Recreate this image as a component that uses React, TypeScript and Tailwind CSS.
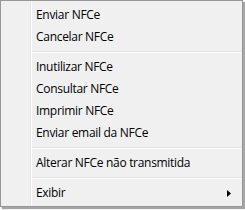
import React from "react";

const Item = ({ label, arrow }: { label: string; arrow?: boolean }) => (
  <div className="h-[22px] flex items-center pl-[4px] pr-[10px] justify-between">
    <span className="text-[12px] leading-none text-black whitespace-nowrap tracking-[-0.3px]">{label}</span>
    {arrow && (
      <svg width="4" height="7" viewBox="0 0 4 7" className="mr-[1px]">
        <path d="M0 0 L4 3.5 L0 7 Z" fill="#000" />
      </svg>
    )}
  </div>
);

const Sep = () => (
  <div className="h-[8px] flex flex-col justify-center">
    <div className="h-px bg-[#e0e0e0]" />
    <div className="h-px bg-white" />
  </div>
);

export default function App() {
  return (
    <div
      className="w-[245px] h-[210px] bg-white"
      style={{ fontFamily: '"Open Sans", "Noto Sans", sans-serif' }}
    >
      <div className="w-[243px] h-[207px] border border-[#979797] bg-[#f0f0f0] flex shadow-[2px_2px_1px_rgba(0,0,0,0.35)]">
        <div className="w-[29px] shrink-0" />
        <div className="w-px bg-[#e2e3e3] shrink-0" />
        <div className="w-px bg-white shrink-0" />
        <div className="flex-1 flex flex-col pt-[3px]">
          <Item label="Enviar NFCe" />
          <Item label="Cancelar NFCe" />
          <Sep />
          <Item label="Inutilizar NFCe" />
          <Item label="Consultar NFCe" />
          <Item label="Imprimir NFCe" />
          <Item label="Enviar email da NFCe" />
          <Sep />
          <Item label="Alterar NFCe não transmitida" />
          <Sep />
          <Item label="Exibir" arrow />
        </div>
      </div>
    </div>
  );
}
